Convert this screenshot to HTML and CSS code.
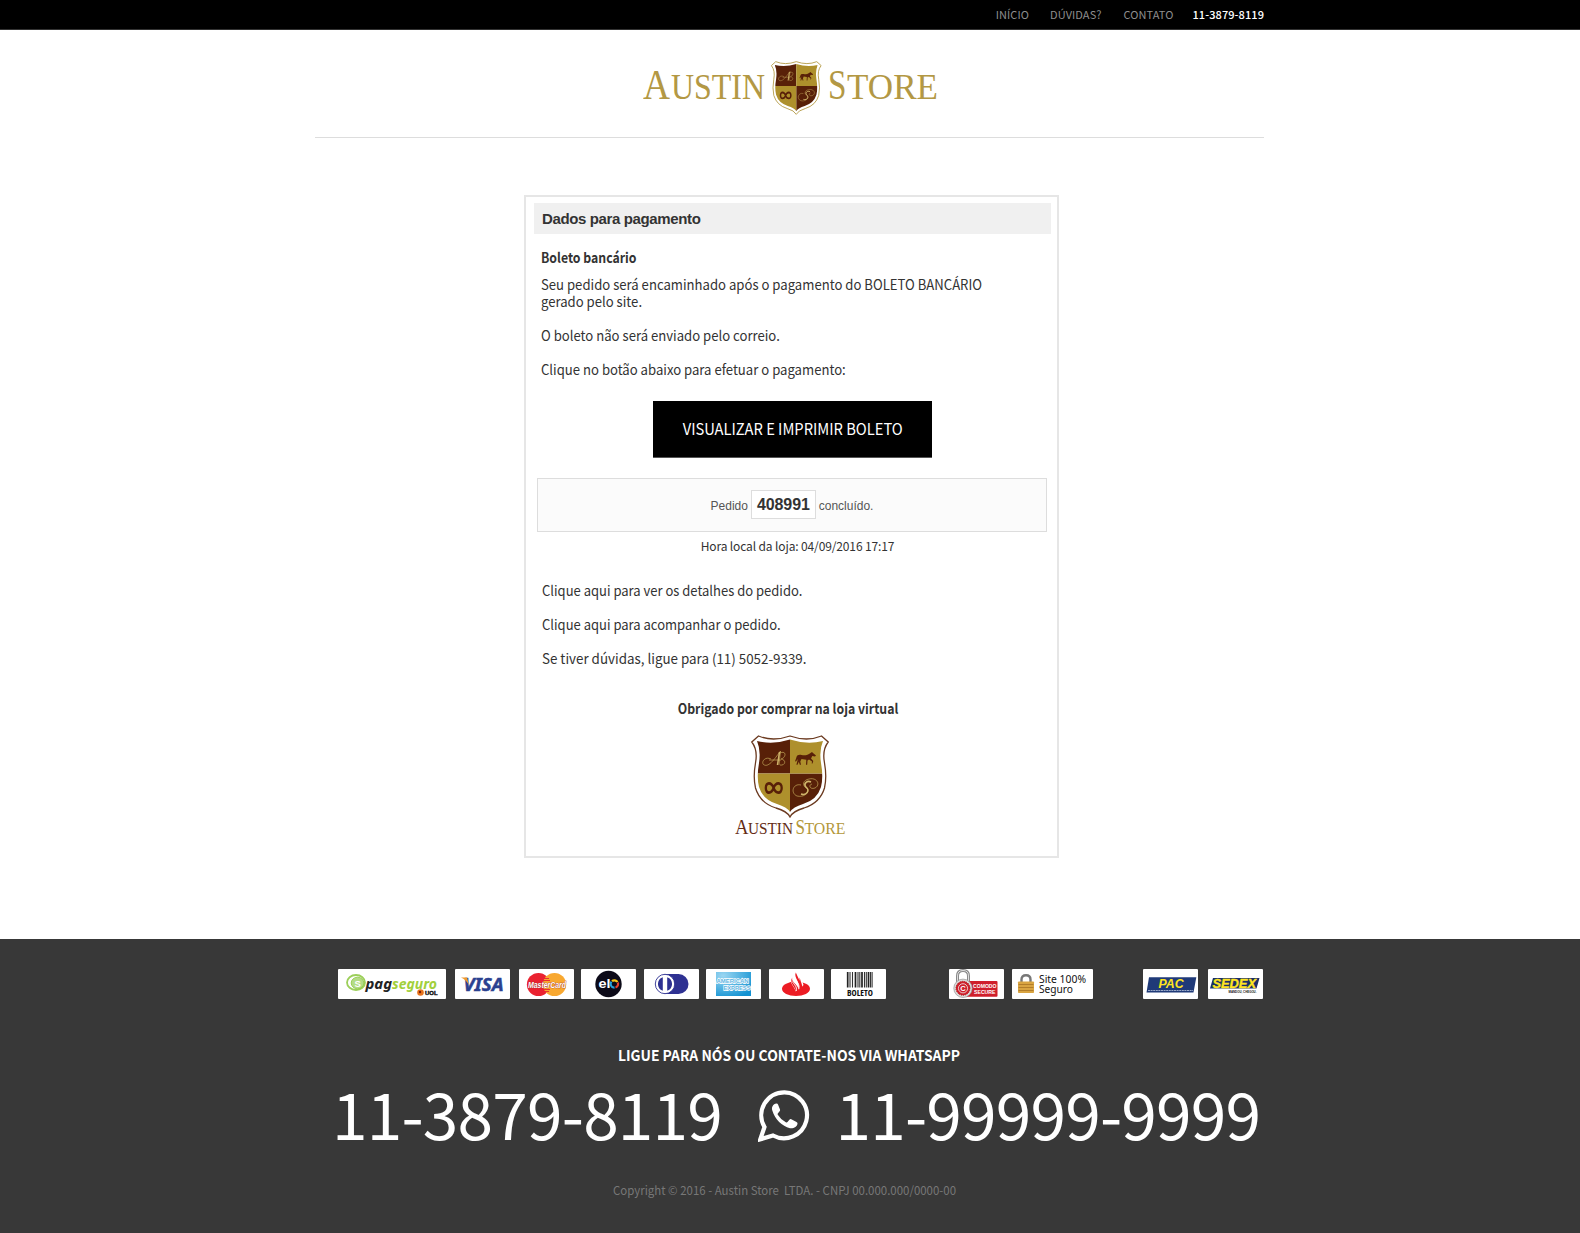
FILE: index.html
```
<!DOCTYPE html>
<html lang="pt-BR">
<head>
<meta charset="utf-8">
<title>Austin Store</title>
<link rel="stylesheet" href="styles.css">
</head>
<body>
<svg class="defs" aria-hidden="true">
  <symbol id="shield" viewBox="0 0 78 83">
    <path d="M7.500 1Q22 7 39 1Q56 7 70.500 1L77.200 7Q71 15 73.500 28Q76 42 73.500 53Q69 68 53 73Q42 76 39 82Q36 76 25 73Q9 68 4.500 53Q2 42 4.500 28Q7 15 .8 7Z" fill="#fff" stroke="currentColor" stroke-width="1.300"/>
    <clipPath id="shield-body"><path d="M6 6Q22 10 39 4.500Q56 10 72 6Q68 15 70 28Q72.500 42 70 52Q66 65 52 69Q42 72 39 77Q36 72 26 69Q12 65 8 52Q5.500 42 8 28Q10 15 6 6Z"/></clipPath>
    <g clip-path="url(#shield-body)">
      <path d="M0 0H39V38.500H0ZM39 38.500H78V83H39Z" fill="#582008"/>
      <path d="M39 0H78V38.500H39ZM0 38.500H39V83H0Z" fill="#ae902c"/>
    </g>
    <g fill="none" stroke="#c3a75a" stroke-width=".7">
      <path d="M20 24C14 21 10 27 12.500 29.500C17 33 23 25 29.500 16L28 30M18 25H30M29 18C36 15 35 23 30 24C36 25 34 31 29 30"/>
      <path d="M50 50C42 48 39 58 46 61C54 63 60 56 55 53C51 50 52 45 58 44C66 42 70 50 64 53C59 55 57 50 61 49"/>
    </g>
    <g fill="none" stroke="#d0b66c" stroke-width="1.500">
      <path d="M28.500 17L26.500 30"/>
      <path d="M60 47C56 45 52 49 55 52C59 55 56 61 50 59"/>
    </g>
    <path d="M22.600 53C20.500 48 14.800 47.800 14.800 53S20.500 58 22.600 53S30.700 47.800 30.700 53S24.700 58 22.600 53Z" fill="none" stroke="#582008" stroke-width="2.300" transform="translate(0 -10.600) scale(1 1.200)"/>
    <path d="M45.500 22C46 20 48 19.500 50.500 20C53 20.500 56 20.500 58 19L61 17L62 18L65 20.500L64 21.500L61.300 21L60 23.500L62.300 26L61.500 28.500H60.700L61 26.500L58 24.500L56.500 25.500L56.200 29.800H55L55.300 24.700L50.500 24L49.300 26.500L50 29.800H48.800L47.800 26.800L46.500 29.800H45.400L46.800 24L45 26.500L44 26.300Q45 24 45.500 22Z" fill="#582008"/>
  </symbol>
</svg>

<header class="topbar">
  <nav class="wrap topbar-nav">
    <a class="nav-home">INÍCIO</a>
    <a class="nav-faq">DÚVIDAS?</a>
    <a class="nav-contact">CONTATO</a>
    <strong>11-3879-8119</strong>
  </nav>
</header>

<div class="wrap brand">
  <svg class="brand-logo" width="300" height="56" viewBox="0 0 300 56">
    <g class="serif" fill="#b39844">
      <text x="0" y="38.500" textLength="27" lengthAdjust="spacingAndGlyphs" font-size="43">A</text>
      <text x="28" y="38.500" textLength="94" lengthAdjust="spacingAndGlyphs" font-size="36">USTIN</text>
      <text x="185" y="38.500" textLength="18.500" lengthAdjust="spacingAndGlyphs" font-size="43">S</text>
      <text x="204" y="38.500" textLength="91" lengthAdjust="spacingAndGlyphs" font-size="36">TORE</text>
    </g>
    <use href="#shield" x="127.500" y="1" width="51.500" height="54" color="#b0943a"/>
  </svg>
</div>

<main class="card">
  <h1>Dados para pagamento</h1>
  <section class="text">
    <h2>Boleto bancário</h2>
    <p>Seu pedido será encaminhado após o pagamento do BOLETO BANCÁRIO<br>gerado pelo site.</p>
    <p>O boleto não será enviado pelo correio.</p>
    <p>Clique no botão abaixo para efetuar o pagamento:</p>
  </section>
  <a class="button"><span>VISUALIZAR E IMPRIMIR BOLETO</span></a>
  <div class="order">Pedido <b>408991</b> concluído.</div>
  <p class="time">Hora local da loja: 04/09/2016 17:17</p>
  <section class="text links">
    <p>Clique aqui para ver os detalhes do pedido.</p>
    <p>Clique aqui para acompanhar o pedido.</p>
    <p class="help">Se tiver dúvidas, ligue para (11) 5052-9339.</p>
  </section>
  <p class="thanks">Obrigado por comprar na loja virtual</p>
  <svg class="card-logo" width="112" height="102" viewBox="0 0 112 102">
    <use href="#shield" x="16" y="0" width="78" height="83" color="#6b3a20"/>
    <g class="serif" fill="#642c14">
      <text x="0" y="98.700" textLength="13.500" lengthAdjust="spacingAndGlyphs" font-size="21">A</text>
      <text x="13" y="98.700" textLength="45" lengthAdjust="spacingAndGlyphs" font-size="17">USTIN</text>
    </g>
    <g class="serif" fill="#b3973a">
      <text x="60.500" y="98.700" textLength="9.500" lengthAdjust="spacingAndGlyphs" font-size="21">S</text>
      <text x="69.500" y="98.700" textLength="41" lengthAdjust="spacingAndGlyphs" font-size="17">TORE</text>
    </g>
  </svg>
</main>

<footer class="footer">
  <div class="wrap badges">
    <svg class="badge" width="108" height="30" viewBox="0 0 108 30">
      <ellipse cx="18" cy="13.500" rx="9" ry="7.500" fill="none" stroke="#9ccf5a" stroke-width="1.800"/>
      <ellipse cx="19.500" cy="14" rx="6.300" ry="5.800" fill="#b4dc86" stroke="#8cc63f" stroke-width=".8"/>
      <text x="16.500" y="17.500" font-size="9.500" font-weight="bold" fill="#fff">S</text>
      <g class="noto" font-size="14.500" font-weight="bold" font-style="italic"><text x="27.500" y="19.500" textLength="26.500" lengthAdjust="spacingAndGlyphs" fill="#222">pag</text><text x="54" y="19.500" textLength="45" lengthAdjust="spacingAndGlyphs" fill="#a2d03c">seguro</text></g>
      <circle cx="82.500" cy="23.500" r="3.300" fill="#e8731c"/><circle cx="82" cy="23" r="1.200" fill="#7a1c08"/>
      <text x="87" y="26" font-size="6" font-weight="bold" textLength="12.500" lengthAdjust="spacingAndGlyphs" fill="#111" stroke="#111" stroke-width=".4">UOL</text>
    </svg>
    <svg class="badge b-visa" width="55" height="30" viewBox="0 0 55 30">
      <text class="noto" x="8.500" y="21.500" font-size="18" font-weight="bold" font-style="italic" textLength="40" lengthAdjust="spacingAndGlyphs" fill="#2b4190" stroke="#2b4190" stroke-width=".5">VISA</text>
      <path d="M6 8.500H12L14 16Q11 10.500 6 8.500Z" fill="#f09a2c"/>
    </svg>
    <svg class="badge b-master" width="55" height="30" viewBox="0 0 55 30">
      <circle cx="19.500" cy="15.500" r="11.600" fill="#ea2230"/>
      <circle cx="35.500" cy="15.500" r="11.600" fill="#f8a830"/>
      <path d="M25 9.500H30M24 11.500H31M24 20.500H31M25 22.500H30" stroke="#ea2230" stroke-width=".9"/>
      <text x="9" y="18.500" font-size="8.500" font-weight="bold" font-style="italic" textLength="38" lengthAdjust="spacingAndGlyphs" fill="#fff" stroke="#a8332a" stroke-width=".7" paint-order="stroke">MasterCard</text>
    </svg>
    <svg class="badge b-elo" width="55" height="30" viewBox="0 0 55 30">
      <circle cx="27.500" cy="15" r="13.200" fill="#0c0a18"/>
      <text x="17.500" y="18.600" font-size="13.500" font-weight="bold" textLength="12" lengthAdjust="spacingAndGlyphs" fill="#fff">el</text>
      <g fill="none" stroke-width="2.200"><path d="M31 12.200A3.700 3.700 0 0 1 36.500 13" stroke="#f5c518"/><path d="M36.800 13.500A3.700 3.700 0 0 1 34.500 18.500" stroke="#e8402c"/><path d="M33.500 18.700A3.700 3.700 0 0 1 30.500 12.600" stroke="#26a3dd"/></g>
    </svg>
    <svg class="badge" width="55" height="30" viewBox="0 0 55 30">
      <path d="M20 5H34.500A10 10 0 0 1 34.500 25H20Z" fill="#2e3192"/>
      <circle cx="21" cy="15" r="9.700" fill="#fff" stroke="#2e3192" stroke-width=".9"/>
      <path d="M18.800 8.200A7.200 7.200 0 0 0 18.800 21.800ZM23.200 8.200A7.200 7.200 0 0 1 23.200 21.800Z" fill="#2e3192"/>
    </svg>
    <svg class="badge b-amex" width="55" height="30" viewBox="0 0 55 30">
      <radialGradient id="amex" cx=".2" cy=".15" r="1"><stop offset="0" stop-color="#9ad6f2"/><stop offset="1" stop-color="#1292d2"/></radialGradient>
      <path d="M10 3H45V27H10Z" fill="url(#amex)"/>
      <g font-size="6.200" font-weight="bold" fill="#5db4e2" stroke="#fff" stroke-width="1.300" paint-order="stroke"><text x="10.500" y="13.500" textLength="32" lengthAdjust="spacingAndGlyphs">AMERICAN</text><text x="17.500" y="20.500" textLength="27" lengthAdjust="spacingAndGlyphs">EXPRESS</text></g>
    </svg>
    <svg class="badge" width="55" height="30" viewBox="0 0 55 30">
      <ellipse cx="27" cy="19.800" rx="14" ry="7.300" fill="#ec1c24"/>
      <path d="M22 9C20.500 15 26 18 26.500 22.500L29.500 22L34.500 16L33 11L28 8Z" fill="#fff"/>
      <path d="M26.800 3.500C24.300 8.500 32 13.500 29.500 20.500C28.800 15 22 13.500 23.200 8.500C19.500 15 28 18.500 26.500 23.200H31C36 18.500 31.500 14 30.800 8.500C30.300 10.300 30.500 11.500 31 12.500" fill="#ec1c24"/>
      <path d="M26.200 9.500C27.500 13 31.200 15 29.800 20.200M23.300 12.500C25 15.500 28.300 17.500 27.300 22" fill="none" stroke="#fff" stroke-width=".9"/>
    </svg>
    <svg class="badge b-boleto" width="55" height="30" viewBox="0 0 55 30">
      <path d="M16.700 3V18.500M24.500 3V18.500M31 3V18.500M37.500 3V18.500" stroke="#222" stroke-width="1.700"/>
      <path d="M19 3V18.500M21.500 3V18.500M27 3V18.500M28.800 3V18.500M33.500 3V18.500M35.300 3V18.500M39.500 3V18.500M41.100 3V18.500" stroke="#333" stroke-width="1.100"/>
      <text x="16" y="27" font-size="8.700" font-weight="bold" textLength="26" fill="#111" class="narrow">BOLETO</text>
    </svg>
    <svg class="badge b-comodo" width="55" height="30" viewBox="0 0 55 30">
      <path d="M8.500 14V7Q8.500 1.500 14 1.500T19.500 7V14" fill="none" stroke="#888" stroke-width="3"/><path d="M8.500 14V7Q8.500 1.500 14 1.500T19.500 7V14" fill="none" stroke="#ddd" stroke-width="1"/>
      <rect x="14" y="12" width="34.500" height="15.800" rx="1" fill="#cf1f2b"/>
      <circle cx="14" cy="19.300" r="9.200" fill="#ddd" stroke="#888" stroke-width=".6"/>
      <circle cx="14" cy="19.300" r="7" fill="#cf1f2b" stroke="#a11" stroke-dasharray="1 1"/><circle cx="14" cy="19.300" r="4.600" fill="#cf1f2b" stroke="#eee" stroke-width=".8"/>
      <text x="11.300" y="22" font-size="7.500" font-weight="bold" fill="#fff">C</text>
      <g font-size="5.700" font-weight="bold" fill="#fff"><text x="24" y="19" textLength="23.500" lengthAdjust="spacingAndGlyphs">COMODO</text><text x="25" y="25" textLength="21.500" lengthAdjust="spacingAndGlyphs">SECURE</text></g>
    </svg>
    <svg class="badge" width="81" height="30" viewBox="0 0 81 30">
      <path d="M9.500 13V10.500Q9.500 6.200 14 6.200T18.500 10.500V13" fill="none" stroke="#777" stroke-width="2.400"/>
      <rect x="6" y="12.500" width="16" height="11.500" rx=".8" fill="#d9a441"/><path d="M6.500 15.500H21.500M6.500 18.500H21.500M6.500 21.500H21.500" stroke="#a87425" stroke-width=".8"/>
      <g class="noto" font-size="11" fill="#111"><text x="27" y="14" textLength="47" lengthAdjust="spacingAndGlyphs">Site 100%</text><text x="27" y="23.500" textLength="34" lengthAdjust="spacingAndGlyphs">Seguro</text></g>
    </svg>
    <svg class="badge b-pac" width="55" height="30" viewBox="0 0 55 30">
      <path d="M6 8.300H53.300L50.500 23.500H3.500Z" fill="#1f3a78"/>
      <text x="15.500" y="18.500" font-size="13" font-weight="bold" font-style="italic" textLength="25" lengthAdjust="spacingAndGlyphs" fill="#ffe51f">PAC</text>
      <path d="M5 21.500H50" stroke="#b8c4dc" stroke-width=".8" stroke-dasharray="2 .6"/>
    </svg>
    <svg class="badge b-sedex" width="55" height="30" viewBox="0 0 55 30">
      <path d="M5 9H51.500L48.500 19.500H2Z" fill="#1b2f66"/>
      <text x="4.500" y="19" font-size="13.500" font-weight="bold" font-style="italic" textLength="43.500" lengthAdjust="spacingAndGlyphs" fill="#ffe51f" stroke="#ffe51f" stroke-width=".4">SEDEX</text>
      <text x="20.500" y="23.500" font-size="3.500" font-weight="bold" textLength="28" lengthAdjust="spacingAndGlyphs" fill="#111">MANDOU, CHEGOU.</text>
    </svg>
  </div>
  <p class="call">LIGUE PARA NÓS OU CONTATE-NOS VIA WHATSAPP</p>
  <div class="wrap phones">
    <span>11-3879-8119</span>
    <svg class="whatsapp" width="52" height="52" viewBox="0 0 52 52">
      <path d="M26.500 2.300A23 23 0 0 0 6.500 37L2.300 49.300L15 45.500A23 23 0 1 0 26.500 2.300Z" fill="none" stroke="#fff" stroke-width="4.200"/>
      <path d="M18.500 13.500C15 14 13.300 17 14.300 20.500C17 29.500 24 36.200 32 38.200C35.500 38.800 39.300 36.500 39.500 33.500Q39.700 32.500 38.500 32L33.300 29.200Q32.200 28.700 31.400 29.800L29.500 32Q28.800 32.700 27.800 32.200Q22.500 29.500 19.800 24.800Q19.200 23.900 20 23.200L21.800 21Q22.300 20.300 22 19.500L20 14.500Q19.600 13.400 18.500 13.500Z" fill="#fff"/>
    </svg>
    <span>11-99999-9999</span>
  </div>
  <p class="copyright">Copyright © 2016 - Austin Store&nbsp; LTDA. - CNPJ 00.000.000/0000-00</p>
</footer>
</body>
</html>
```
FILE: styles.css
```
* { box-sizing: border-box; }
body {
  margin: 0;
  background: #fff;
  color: #333;
  font: 14px/17px "Noto Sans CJK SC", "Open Sans", sans-serif;
}
h1, h2, p { margin: 0; }
.defs { position: absolute; width: 0; height: 0; }
.wrap { width: 949px; margin-left: 315px; }
.serif { font-family: "Liberation Serif", serif; }
.noto { font-family: "Noto Sans", sans-serif; }
.narrow { font-family: "Open Sans", sans-serif; font-stretch: 75%; }

.topbar { height: 30px; background: #000; border-bottom: 1px solid #333; }
.topbar-nav {
  display: flex;
  justify-content: flex-end;
  color: #8e8e8e;
  font-size: 11px;
  line-height: 28px;
  letter-spacing: .08px;
}
.nav-home { margin-right: 21px; }
.nav-faq { margin-right: 22px; }
.nav-contact { margin-right: 19px; }
.topbar strong { font-weight: 500; color: #fff; }

.brand { height: 108px; padding-top: 30px; border-bottom: 1px solid #ddd; }
.brand-logo { display: block; margin-left: 328px; }

.card { width: 535px; height: 663px; margin: 57px 0 0 524px; border: 2px solid #e6e6e6; padding-top: 6px; }
.card h1 {
  height: 31px;
  margin: 0 6px 0 8px;
  padding-left: 8px;
  background: #f0f0f0;
  font: bold 15px/31px "Liberation Sans", sans-serif;
  letter-spacing: -.37px;
}

/* Condensed setting of the body copy */
.text h2, .text p, .button span, .thanks, .call, .copyright { transform: scaleX(.937); transform-origin: 0 50%; }

.text { margin-left: 15px; white-space: nowrap; }
.text h2 { margin: 13px 0 9px; font-size: 14px; line-height: 20px; transform: scaleX(.877); }
.text p + p { margin-top: 17px; }
.button {
  display: flex;
  justify-content: center;
  width: 279px;
  height: 57px;
  margin: 23px 0 0 127px;
  border-bottom: 1px solid #555;
  background: #000;
  color: #fff;
  font-size: 16px;
  line-height: 54px;
}
.button span { flex: none; transform: scaleX(.919); transform-origin: 50% 50%; }
.order {
  display: flex;
  justify-content: center;
  align-items: baseline;
  gap: 3px;
  height: 54px;
  margin: 20px 10px 0 11px;
  padding-top: 11px;
  border: 1px solid #ddd;
  background: #fbfbfb;
  color: #555;
  font: 12px/27px "Liberation Sans", sans-serif;
}
.order b { padding: 0 5px; border: 1px solid #ddd; background: #fff; color: #333; font-size: 16px; letter-spacing: -.1px; }
.time {
  margin-top: 6px;
  padding-left: 12px;
  font-size: 12px;
  line-height: 16px;
  letter-spacing: -.13px;
  text-align: center;
}
.links { margin-top: 28px; margin-left: 16px; }
.links p { transform: scaleX(.929); }
.links .help { transform: scaleX(.955); }
.thanks { margin: 33px 7px 0 0; font-weight: bold; text-align: center; transform: scaleX(.878); transform-origin: 50% 50%; }
.card-logo { display: block; margin: 18px 0 0 209px; }

.footer { height: 294px; margin-top: 81px; padding-top: 30px; background: #383838; color: #fff; }
.badges { display: flex; gap: 8px; padding-left: 23px; height: 30px; font-family: "Liberation Sans", sans-serif; }
.badge { flex: none; background: #fff; border-radius: 1px; }
.b-visa, .b-master { margin-left: 1px; }
.b-elo, .b-amex, .b-boleto { margin-left: -1px; }
.b-comodo { margin-left: 55px; }
.b-pac { margin-left: 42px; }
.b-sedex { margin-left: 2px; }
.call {
  margin: 46px 2px 0 0;
  font-size: 15px;
  font-weight: bold;
  line-height: 20px;
  text-align: center;
  transform: scaleX(.926);
  transform-origin: 50% 50%;
}
.phones {
  display: flex;
  align-items: center;
  height: 66px;
  margin-top: 14px;
  padding-left: 17px;
  font-size: 64px;
  line-height: 66px;
  letter-spacing: -.8px;
  white-space: nowrap;
}
.whatsapp { flex: none; margin: 7px 25.5px 0 36px; }
.copyright {
  margin: 35px 11px 0 0;
  color: #777;
  font-size: 12px;
  line-height: 20px;
  text-align: center;
  transform: scaleX(.954);
  transform-origin: 50% 50%;
}
```
